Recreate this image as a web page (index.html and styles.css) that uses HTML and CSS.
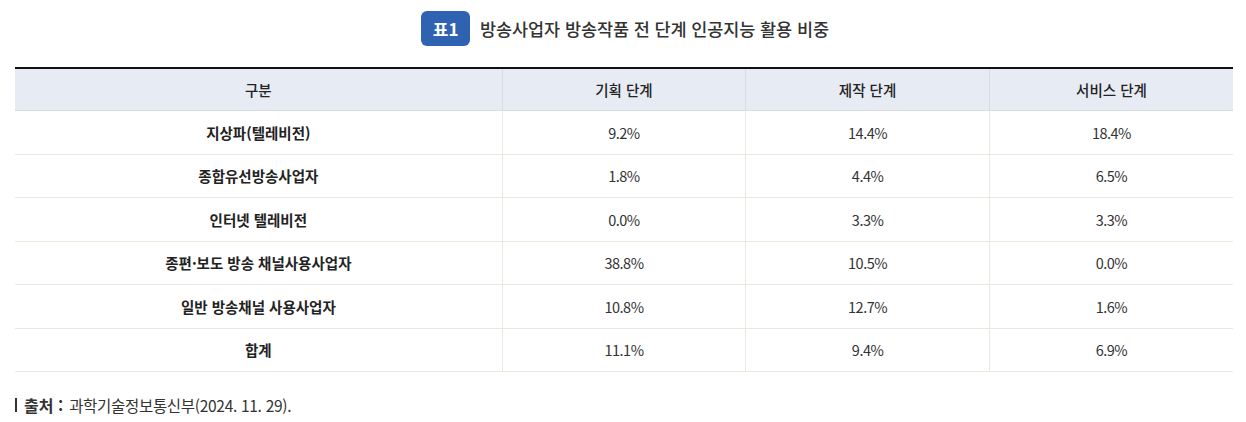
FILE: index.html
```html
<!DOCTYPE html>
<html lang="ko">
<head>
<meta charset="utf-8">
<title>표1</title>
<link rel="stylesheet" href="styles.css">
</head>
<body>
<div class="page">
  <div class="caption">
    <span class="badge">표1</span>
    <span class="caption-text">방송사업자 방송작품 전 단계 인공지능 활용 비중</span>
  </div>
  <table class="data">
    <colgroup>
      <col class="c1"><col class="c2"><col class="c2"><col class="c2">
    </colgroup>
    <thead>
      <tr><th>구분</th><th>기획 단계</th><th>제작 단계</th><th>서비스 단계</th></tr>
    </thead>
    <tbody>
      <tr><th>지상파(텔레비전)</th><td>9.2%</td><td>14.4%</td><td>18.4%</td></tr>
      <tr><th>종합유선방송사업자</th><td>1.8%</td><td>4.4%</td><td>6.5%</td></tr>
      <tr><th>인터넷 텔레비전</th><td>0.0%</td><td>3.3%</td><td>3.3%</td></tr>
      <tr><th>종편·보도 방송 채널사용사업자</th><td>38.8%</td><td>10.5%</td><td>0.0%</td></tr>
      <tr><th>일반 방송채널 사용사업자</th><td>10.8%</td><td>12.7%</td><td>1.6%</td></tr>
      <tr><th>합계</th><td>11.1%</td><td>9.4%</td><td>6.9%</td></tr>
    </tbody>
  </table>
  <p class="source"><span class="bar"></span><strong>출처 :</strong><span class="source-text">과학기술정보통신부(2024. 11. 29).</span></p>
</div>
</body>
</html>
```

FILE: styles.css
```css
html, body {
  margin: 0;
  padding: 0;
  background: #ffffff;
}
body {
  font-family: "Noto Sans CJK KR", "Noto Sans", sans-serif;
  color: #333333;
}
.page {
  padding: 11px 13px 0 15px;
}
.caption {
  display: flex;
  justify-content: center;
  align-items: center;
  gap: 10px;
  margin-left: 2px;
}
.badge {
  display: inline-flex;
  align-items: center;
  justify-content: center;
  width: 49px;
  height: 35px;
  border-radius: 6px;
  background: #2f63b1;
  color: #ffffff;
  font-weight: 700;
  font-size: 17px;
}
.caption-text {
  font-size: 17.5px;
  font-weight: 500;
  color: #333333;
  letter-spacing: -0.1px;
}
.data {
  width: 100%;
  margin-top: 21px;
  border-collapse: collapse;
  table-layout: fixed;
  border-top: 2px solid #111111;
}
.c1 { width: 40%; }
.c2 { width: 20%; }
.data th, .data td {
  height: 42.5px;
  padding: 0;
  text-align: center;
  vertical-align: middle;
  font-size: 14.5px;
  color: #333333;
  border-bottom: 1px solid #ebe8dd;
  border-left: 1px solid #ebe8dd;
}
.data tr > :first-child {
  border-left: none;
}
.data thead th {
  height: 41px;
  background: #e7ebf3;
  font-weight: 500;
  color: #222222;
  border-bottom: 1px solid #d9dbe0;
  border-left: 1px solid #d9dce4;
}
.data tbody th {
  font-weight: 700;
  color: #222222;
}
.data tbody td {
  font-weight: 400;
  letter-spacing: -0.5px;
}
.source {
  display: flex;
  align-items: center;
  margin: 21px 0 0 0;
  font-size: 16px;
  color: #333333;
}
.bar {
  display: inline-block;
  width: 2px;
  height: 14px;
  background: #333333;
  margin-right: 7px;
}
.source strong {
  font-weight: 700;
  margin-right: 6px;
}
.source-text {
  font-size: 15.5px;
  letter-spacing: -0.3px;
}
```
